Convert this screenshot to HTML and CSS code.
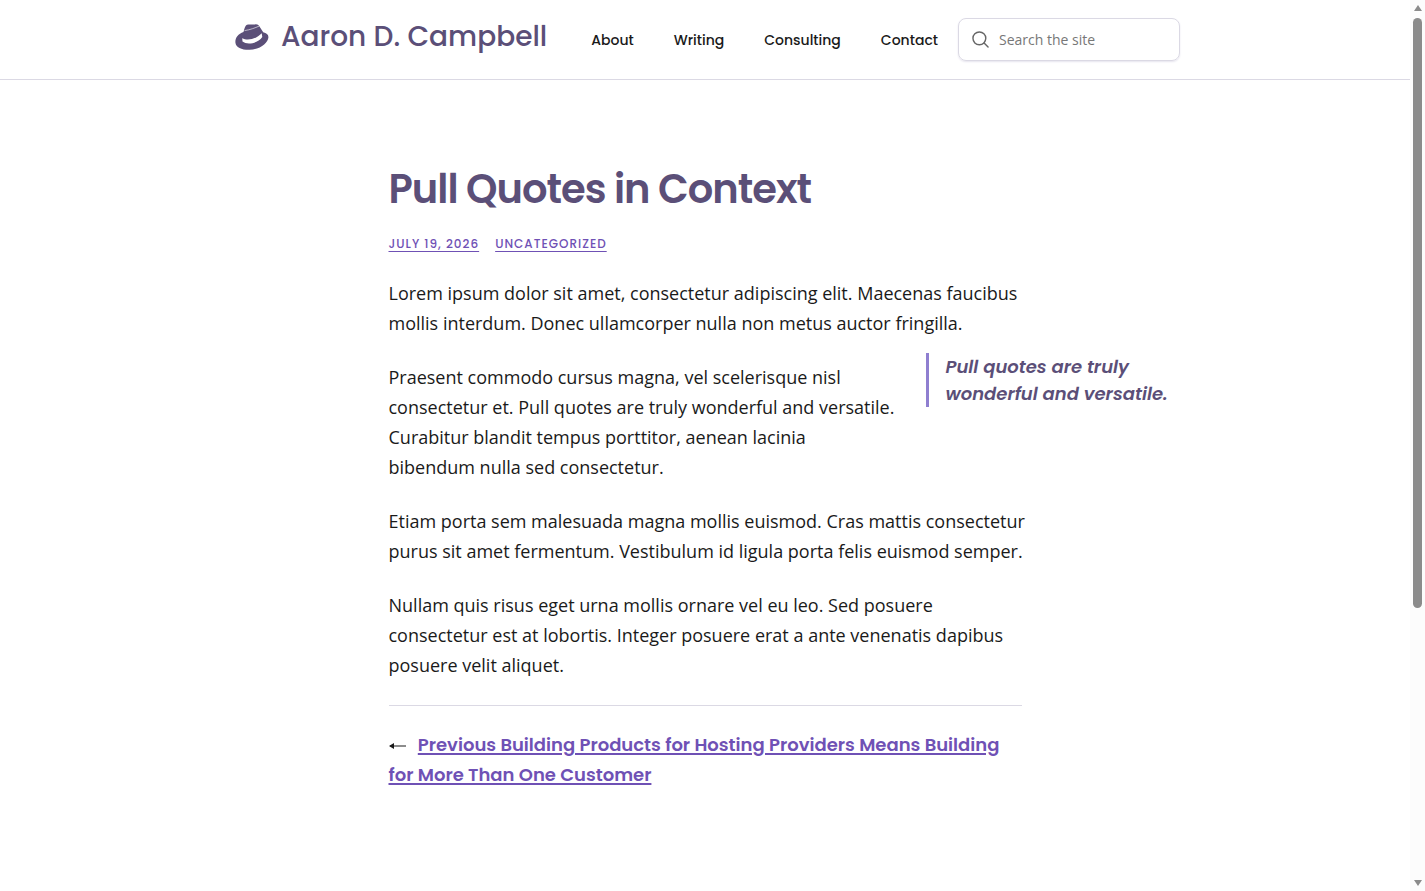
FILE: index.html
```html
<!DOCTYPE html>
<html lang="en">
<head>
    <meta charset="UTF-8">
    <meta name="viewport" content="width=device-width, initial-scale=1.0">
    <title>Pull Quotes in Context - Aaron D. Campbell</title>
    <link rel="stylesheet" href="styles.css">
</head>
<body>
    <header class="site-header">
        <div class="header-inner">
            <a class="brand" href="#">
                <svg class="hat" viewBox="0 0 34 26" aria-hidden="true">
                    <path fill="#5b4f78" d="M8.5 8 C9.500 4 10.500 1.500 12 .8 C15-.1 17.500 1 20 .4 C22 0 23.500.8 24.500 2.500 L28.200 8.300 C31.500 8.900 33.600 10.800 33.400 13.400 C32.900 18.500 25.500 25.600 14.500 25.800 C7 26 .8 23.300.4 18.400 C.1 13.800 3 10 8.500 8Z"/>
                    <path fill="#fff" d="M7.200 14.200 C12.500 17.200 21.500 15 26.700 9.300 L27.300 13 C23 19.200 12.500 21.400 7.500 17.600Z"/>
                    <path fill="none" stroke="#fff" stroke-width=".6" d="M9.500 6.600 C15 5.800 20 4 24.300 2"/>
                </svg>
                <span>Aaron D. Campbell</span>
            </a>
            <nav class="main-nav">
                <a href="#">About</a>
                <a href="#">Writing</a>
                <a href="#">Consulting</a>
                <a href="#">Contact</a>
            </nav>
            <form class="search">
                <svg viewBox="0 0 18 18" aria-hidden="true">
                    <circle cx="7.800" cy="7.800" r="6.800"/>
                    <path d="M12.800 12.800 L17 17"/>
                </svg>
                <input type="search" placeholder="Search the site" aria-label="Search the site">
            </form>
        </div>
    </header>

    <main class="post">
        <h1>Pull Quotes in Context</h1>
        <div class="meta">
            <a href="#">July 19, 2026</a>
            <a href="#">Uncategorized</a>
        </div>
        <div class="content">
            <p>Lorem ipsum dolor sit amet, consectetur adipiscing elit. Maecenas faucibus mollis interdum. Donec ullamcorper nulla non metus auctor fringilla.</p>
            <aside class="pull-quote">Pull quotes are truly wonderful and versatile.</aside>
            <p>Praesent commodo cursus magna, vel scelerisque nisl consectetur et. Pull quotes are truly wonderful and versatile. Curabitur blandit tempus porttitor, aenean lacinia bibendum nulla sed consectetur.</p>
            <p>Etiam porta sem malesuada magna mollis euismod. Cras mattis consectetur purus sit amet fermentum. Vestibulum id ligula porta felis euismod semper.</p>
            <p>Nullam quis risus eget urna mollis ornare vel eu leo. Sed posuere consectetur est at lobortis. Integer posuere erat a ante venenatis dapibus posuere velit aliquet.</p>
        </div>
        <nav class="post-nav">
            <svg viewBox="0 0 17 10" aria-hidden="true"><path d="M17 5H1"/><path class="head" d="M0 5L5 2V8Z"/></svg>
            <a href="#">Previous Building Products for Hosting Providers Means Building for More Than One Customer</a>
        </nav>
    </main>

    <!-- scrollbar -->
    <div class="scrollbar" aria-hidden="true">
        <span class="arrow up"></span>
        <span class="track"><span class="thumb"></span></span>
        <span class="arrow down"></span>
    </div>
</body>
</html>
```
FILE: styles.css
```css
* {
    box-sizing: border-box;
}
body {
    margin: 0;
    padding-right: 15px;
    background: #fff;
    color: #1a1a1a;
    font-family: "Open Sans", sans-serif;
    font-size: 18px;
    line-height: 30px;
}
.site-header {
    border-bottom: 1px solid #dbd9e4;
}
.header-inner {
    display: flex;
    align-items: center;
    max-width: 950px;
    min-height: 79px;
    margin: 0 auto;
    padding-left: 5px;
}
.brand {
    display: flex;
    align-items: center;
    gap: 12px;
    padding-bottom: 6px;
    color: #5b4f78;
    font: 500 28px/40px Poppins, Inter, sans-serif;
    text-decoration: none;
    white-space: nowrap;
}
.hat {
    width: 34px;
    height: 26px;
}
.main-nav {
    display: flex;
    gap: 40px;
    margin: 0 20px 0 auto;
}
.main-nav a {
    color: #1a1a1a;
    font: 500 14px/24px Poppins, Inter, sans-serif;
    text-decoration: none;
}
.search {
    display: flex;
    align-items: center;
    gap: 10px;
    width: 222px;
    height: 43px;
    padding: 0 13px;
    border: 1px solid #dbd9e4;
    border-radius: 8px;
    box-shadow: 0 1px 2px #e6e4ee;
}
.search svg {
    flex: none;
    width: 17px;
    height: 17px;
    fill: none;
    stroke: #666;
    stroke-width: 1.5;
    stroke-linecap: round;
}
.search input {
    width: 100%;
    min-width: 0;
    padding: 0;
    border: 0;
    outline: none;
    background: none;
    font: 14px/24px "Open Sans", sans-serif;
}
.search input::placeholder {
    color: #777;
}

.post {
    max-width: 633px;
    margin: 0 auto;
    padding: 83px 0 100px;
}
h1 {
    margin: 0;
    color: #5b4f78;
    font: 600 40px/52px Poppins, Inter, sans-serif;
    letter-spacing: -1px;
}
.meta {
    display: flex;
    gap: 16px;
    margin-top: 19px;
    font: 500 12px/20px Poppins, Inter, sans-serif;
    letter-spacing: 1px;
    text-transform: uppercase;
}
.meta a,
.post-nav a {
    color: #6f51b5;
    text-decoration: underline 1px #6f51b5;
    text-underline-offset: 3px;
}
.content {
    margin-right: -6px;
}
.content p {
    margin: 24px 0 0;
}
.pull-quote {
    float: right;
    width: 254px;
    margin: 15px -152px 24px 30px;
    padding-left: 17px;
    border-left: 3px solid #8f7fd0;
    color: #5b4f78;
    font: italic 600 18px/27px Poppins, Inter, sans-serif;
}
.post-nav {
    margin-top: 25px;
    padding-top: 24px;
    border-top: 1px solid #dbd9e4;
    font: 600 18px/30px Poppins, Inter, sans-serif;
}
.post-nav a {
    text-decoration-thickness: 2px;
    text-underline-offset: 2px;
}
.post-nav svg {
    width: 17px;
    height: 10px;
    margin-right: 8px;
    fill: none;
    stroke: #1a1a1a;
}
.post-nav .head {
    fill: #1a1a1a;
    stroke: none;
}

.scrollbar {
    position: fixed;
    top: 0;
    right: 0;
    bottom: 0;
    display: flex;
    flex-direction: column;
    align-items: center;
    width: 15px;
    padding: 5px 0;
    background: #fcfcfc;
}
.arrow {
    border: 4px solid transparent;
}
.up {
    border-top: 0;
    border-bottom: 6px solid #8b8b8b;
}
.down {
    border-bottom: 0;
    border-top: 6px solid #8b8b8b;
}
.track {
    flex: 1;
    padding: 7px 0;
}
.thumb {
    display: block;
    width: 9px;
    height: 69%;
    border-radius: 5px;
    background: #8b8b8b;
}
```
